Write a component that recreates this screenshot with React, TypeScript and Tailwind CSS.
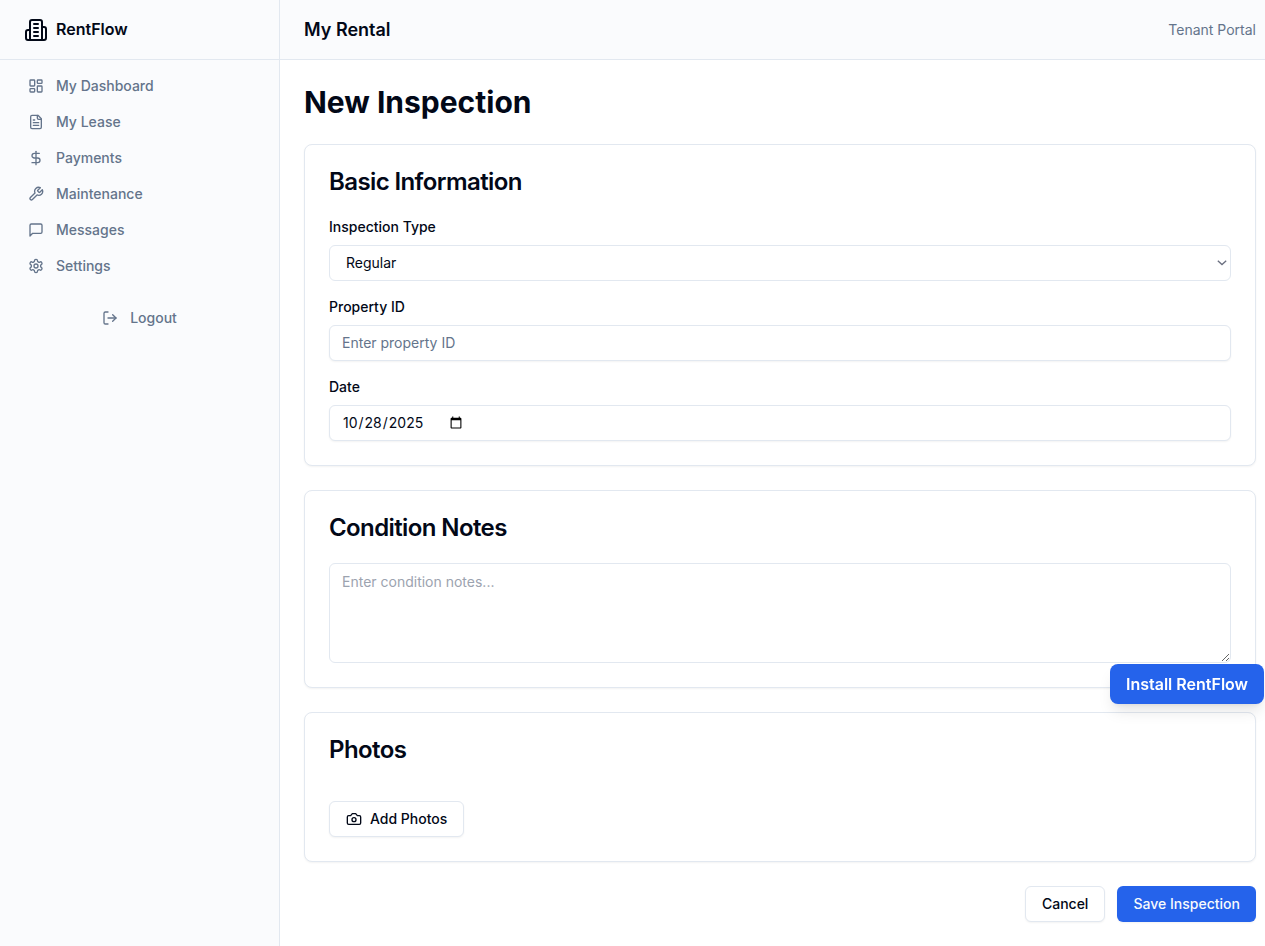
import type { ReactNode } from "react";

type IconProps = { className?: string; children: ReactNode };

function Icon({ className = "size-4", children }: IconProps) {
  return (
    <svg
      viewBox="0 0 24 24"
      fill="none"
      stroke="currentColor"
      strokeWidth={2}
      strokeLinecap="round"
      strokeLinejoin="round"
      className={`shrink-0 ${className}`}
      aria-hidden="true"
    >
      {children}
    </svg>
  );
}

const navItems: { label: string; icon: ReactNode }[] = [
  {
    label: "My Dashboard",
    icon: (
      <>
        <rect width="7" height="9" x="3" y="3" rx="1" />
        <rect width="7" height="5" x="14" y="3" rx="1" />
        <rect width="7" height="9" x="14" y="12" rx="1" />
        <rect width="7" height="5" x="3" y="16" rx="1" />
      </>
    ),
  },
  {
    label: "My Lease",
    icon: (
      <>
        <path d="M15 2H6a2 2 0 0 0-2 2v16a2 2 0 0 0 2 2h12a2 2 0 0 0 2-2V7Z" />
        <path d="M14 2v4a2 2 0 0 0 2 2h4" />
        <path d="M10 9H8" />
        <path d="M16 13H8" />
        <path d="M16 17H8" />
      </>
    ),
  },
  {
    label: "Payments",
    icon: (
      <>
        <line x1="12" x2="12" y1="2" y2="22" />
        <path d="M17 5H9.5a3.5 3.5 0 0 0 0 7h5a3.5 3.5 0 0 1 0 7H6" />
      </>
    ),
  },
  {
    label: "Maintenance",
    icon: (
      <path d="M14.7 6.3a1 1 0 0 0 0 1.4l1.6 1.6a1 1 0 0 0 1.4 0l3.77-3.77a6 6 0 0 1-7.94 7.94l-6.91 6.91a2.12 2.12 0 0 1-3-3l6.91-6.91a6 6 0 0 1 7.94-7.94l-3.76 3.76z" />
    ),
  },
  {
    label: "Messages",
    icon: <path d="M21 15a2 2 0 0 1-2 2H7l-4 4V5a2 2 0 0 1 2-2h14a2 2 0 0 1 2 2z" />,
  },
  {
    label: "Settings",
    icon: (
      <>
        <path d="M12.22 2h-.44a2 2 0 0 0-2 2v.18a2 2 0 0 1-1 1.73l-.43.25a2 2 0 0 1-2 0l-.15-.08a2 2 0 0 0-2.73.73l-.22.38a2 2 0 0 0 .73 2.73l.15.1a2 2 0 0 1 1 1.72v.51a2 2 0 0 1-1 1.74l-.15.09a2 2 0 0 0-.73 2.73l.22.38a2 2 0 0 0 2.73.73l.15-.08a2 2 0 0 1 2 0l.43.25a2 2 0 0 1 1 1.73V20a2 2 0 0 0 2 2h.44a2 2 0 0 0 2-2v-.18a2 2 0 0 1 1-1.73l.43-.25a2 2 0 0 1 2 0l.15.08a2 2 0 0 0 2.73-.73l.22-.39a2 2 0 0 0-.73-2.73l-.15-.08a2 2 0 0 1-1-1.74v-.5a2 2 0 0 1 1-1.74l.15-.09a2 2 0 0 0 .73-2.73l-.22-.38a2 2 0 0 0-2.73-.73l-.15.08a2 2 0 0 1-2 0l-.43-.25a2 2 0 0 1-1-1.73V4a2 2 0 0 0-2-2z" />
        <circle cx="12" cy="12" r="3" />
      </>
    ),
  },
];

function Sidebar() {
  return (
    <aside className="flex w-[280px] shrink-0 flex-col border-r border-[#e2e8f0] bg-[#fafbfd]">
      <div className="flex h-[60px] items-center gap-2 border-b border-[#e2e8f0] px-6 font-semibold">
        <Icon className="size-6">
          <path d="M6 22V4a2 2 0 0 1 2-2h8a2 2 0 0 1 2 2v18Z" />
          <path d="M6 12H4a2 2 0 0 0-2 2v6a2 2 0 0 0 2 2h2" />
          <path d="M18 9h2a2 2 0 0 1 2 2v9a2 2 0 0 1-2 2h-2" />
          <path d="M10 6h4" />
          <path d="M10 10h4" />
          <path d="M10 14h4" />
          <path d="M10 18h4" />
        </Icon>
        <span className="pb-px">RentFlow</span>
      </div>
      <nav className="flex flex-col px-4 pt-2 text-sm font-medium text-[#64748b]">
        {navItems.map((item) => (
          <a key={item.label} className="flex h-9 items-center gap-3 px-3">
            <Icon>{item.icon}</Icon>
            {item.label}
          </a>
        ))}
        <button className="mt-4 flex h-9 items-center justify-center gap-3 px-3">
          <Icon>
            <path d="M9 21H5a2 2 0 0 1-2-2V5a2 2 0 0 1 2-2h4" />
            <polyline points="16 17 21 12 16 7" />
            <line x1="21" x2="9" y1="12" y2="12" />
          </Icon>
          Logout
        </button>
      </nav>
    </aside>
  );
}

function Card({ title, children }: { title: string; children: ReactNode }) {
  return (
    <section className="rounded-lg border border-[#e2e8f0] bg-white p-6 shadow-[0_1px_2px_0_rgba(0,0,0,0.05)]">
      <h3 className="mb-[23px] pt-px text-2xl leading-none font-semibold tracking-tight">{title}</h3>
      {children}
    </section>
  );
}

function Field({ label, children }: { label: string; children: ReactNode }) {
  return (
    <label className="flex flex-col gap-2 text-sm">
      <span className="font-medium">{label}</span>
      {children}
    </label>
  );
}

export default function App() {
  return (
    <div className="flex h-[946px] overflow-hidden bg-white font-['Inter',sans-serif] text-[#020817]">
      <Sidebar />
      <div className="flex min-w-0 grow flex-col">
        <header className="flex h-[60px] shrink-0 items-center justify-between border-b border-[#e2e8f0] bg-[#fafbfd] pr-[9px] pl-6">
          <h2 className="text-lg font-semibold">My Rental</h2>
          <span className="text-sm text-[#64748b]">Tenant Portal</span>
        </header>
        <main className="flex flex-col gap-6 pt-6 pr-[9px] pl-6">
          <h1 className="text-3xl font-bold">New Inspection</h1>
          <Card title="Basic Information">
            <div className="flex flex-col gap-4">
              <Field label="Inspection Type">
                <div className="relative">
                  <select className="block h-9 w-full appearance-none rounded-md border border-[#e2e8f0] bg-white px-4 pb-px text-sm">
                    <option>Regular</option>
                  </select>
                  <svg
                    viewBox="0 0 10 6"
                    fill="none"
                    stroke="#6b7080"
                    strokeWidth={1.3}
                    className="pointer-events-none absolute top-[15px] right-1 h-1.5 w-2.5"
                    aria-hidden="true"
                  >
                    <path d="M0.8 0.8 L5 4.6 L9.2 0.8" />
                  </svg>
                </div>
              </Field>
              <Field label="Property ID">
                <input
                  className="h-9 w-full rounded-md border border-[#e2e8f0] bg-white px-3 pt-[3px] pb-[5px] text-sm shadow-[0_1px_2px_0_rgba(0,0,0,0.05)] placeholder:text-[#64748b]"
                  placeholder="Enter property ID"
                />
              </Field>
              <Field label="Date">
                <input
                  type="date"
                  defaultValue="2025-10-28"
                  className="h-9 w-full rounded-md border border-[#e2e8f0] bg-white px-3 py-1 text-sm shadow-[0_1px_2px_0_rgba(0,0,0,0.05)] [&::-webkit-calendar-picker-indicator]:ms-[-3px] [&::-webkit-datetime-edit]:flex-none"
                />
              </Field>
            </div>
          </Card>
          <Card title="Condition Notes">
            <textarea
              className="block h-[100px] w-full rounded-md border border-[#e2e8f0] bg-white px-3 py-2 text-sm placeholder:text-[#9ca3af]"
              placeholder="Enter condition notes..."
            />
          </Card>
          <Card title="Photos">
            <div className="pt-4">
              <button className="flex h-9 w-[135.4px] items-center gap-2 rounded-md border border-[#e2e8f0] bg-white pl-4 text-sm font-medium shadow-[0_1px_2px_0_rgba(0,0,0,0.05)]">
                <Icon>
                  <path d="M14.5 4h-5L7 7H4a2 2 0 0 0-2 2v9a2 2 0 0 0 2 2h16a2 2 0 0 0 2-2V9a2 2 0 0 0-2-2h-3l-2.5-3z" />
                  <circle cx="12" cy="13" r="3" />
                </Icon>
                Add Photos
              </button>
            </div>
          </Card>
          <div className="flex justify-end gap-3">
            <button className="h-9 rounded-md border border-[#e2e8f0] bg-white px-4 text-sm font-medium shadow-[0_1px_2px_0_rgba(0,0,0,0.05)]">
              Cancel
            </button>
            <button className="h-9 w-[138.6px] rounded-md bg-[#2563eb] text-sm font-medium text-[#f8fafc] shadow-[0_1px_2px_0_rgba(0,0,0,0.05)]">
              Save Inspection
            </button>
          </div>
        </main>
      </div>
      <button className="fixed top-[664px] right-px h-10 rounded-lg bg-[#2563eb] px-4 font-semibold text-white shadow-lg">
        Install RentFlow
      </button>
    </div>
  );
}
